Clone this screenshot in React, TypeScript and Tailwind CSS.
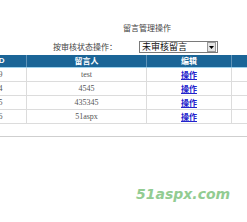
const rows = [
    { id: "9", name: "test" },
    { id: "4", name: "4545" },
    { id: "5", name: "435345" },
    { id: "6", name: "51aspx" },
]

const cjk = "font-['SimSun','Noto_Sans_CJK_SC',sans-serif]"

export default function App() {
    return (
        <div className="relative w-[247px] h-[222px] bg-white overflow-hidden">
            <div className={`pt-[23px] pl-[123px] h-[40px] text-[8px] leading-[10px] text-[#444] ${cjk}`}>留言管理操作</div>

            <div className="flex items-center h-[14px] mb-[1px]">
                <div className={`pl-[53px] w-[139px] text-[8px] leading-[10px] text-[#444] ${cjk}`}>按审核状态操作：</div>
                <div className="flex items-center w-[79px] h-[12px] border border-[#7a7a7a] bg-white">
                    <span className={`flex-1 pl-[2px] text-[9px] leading-[10px] text-[#111] ${cjk}`}>未审核留言</span>
                    <span className="flex items-center justify-center w-[9px] h-[10px] bg-[#e4e4e4] border border-[#999] mr-[1px]">
                        <svg width="5" height="3" viewBox="0 0 5 3"><path d="M0 0h5L2.5 3z" fill="#000" /></svg>
                    </span>
                </div>
            </div>

            <div className="ml-[-25px] w-[300px]">
                <div className="grid grid-cols-[52px_120px_85px_43px] h-[13px] bg-[#1b6597] border-b border-[#9fd3ee]">
                    {["ID", "留言人", "编辑", ""].map((h, i) => (
                        <div key={i} className={`flex items-center justify-center text-[8px] font-bold text-white border-r border-[#5f93b8] ${i === 0 ? "font-['Liberation_Sans',sans-serif]" : cjk}`}>{h}</div>
                    ))}
                </div>
                {rows.map((r) => (
                    <div key={r.id} className="grid grid-cols-[52px_120px_85px_43px] h-[14px] border-b border-[#dcdcdc]">
                        <div className="flex items-center justify-center text-[8px] text-[#555] font-['Liberation_Serif',serif] border-r border-[#dcdcdc]">{r.id}</div>
                        <div className="flex items-center justify-center text-[8px] text-[#555] font-['Liberation_Serif',serif] border-r border-[#dcdcdc]">{r.name}</div>
                        <div className="flex items-center justify-center border-r border-[#dcdcdc]">
                            <a href="#" className={`text-[8px] font-bold text-[#2222cc] underline ${cjk}`}>操作</a>
                        </div>
                        <div className="border-r border-[#dcdcdc]"></div>
                    </div>
                ))}
            </div>

            <div className="mt-[12px] h-[1px] bg-[#cfcfcf]"></div>

            <div className="absolute left-[136px] top-[185px] text-[14px] leading-[18px] font-bold italic text-[#92cc92] font-['DejaVu_Sans',sans-serif]">51aspx.com</div>
        </div>
    )
}
